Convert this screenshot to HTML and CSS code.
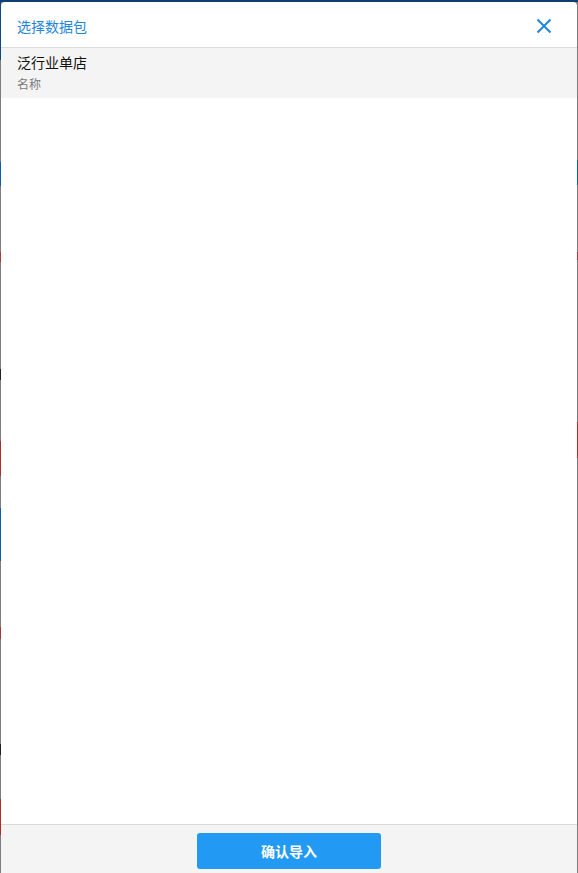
FILE: index.html
```html
<!DOCTYPE html>
<html lang="zh-CN">
<head>
<meta charset="utf-8">
<title>选择数据包</title>
<link rel="stylesheet" href="styles.css">
</head>
<body>
<div class="modal">
  <div class="modal-header">
    <span class="modal-title">选择数据包</span>
    <button class="close-btn" type="button" aria-label="关闭">
      <svg width="16" height="16" viewBox="0 0 16 16"><path d="M1.5 1.5 L14.5 14.5 M14.5 1.5 L1.5 14.5" stroke="#1f86dc" stroke-width="2" fill="none"/></svg>
    </button>
  </div>
  <div class="modal-body">
    <div class="pkg-item">
      <div class="pkg-name">泛行业单店</div>
      <div class="pkg-label">名称</div>
    </div>
  </div>
  <div class="modal-footer">
    <button class="confirm-btn" type="button">确认导入</button>
  </div>
</div>
</body>
</html>
```
FILE: styles.css
```css
html, body {
  margin: 0;
  padding: 0;
  height: 100%;
  overflow: hidden;
}
body {
  font-family: "Liberation Sans", "Noto Sans CJK SC", sans-serif;
  padding: 2px 1px 0 1px;
  box-sizing: border-box;
  background:
    linear-gradient(#0c3f74, #0c3f74) left top / 100% 2px no-repeat,
    linear-gradient(#0c4a86, #0c4a86) left top / 1px 60px no-repeat,
    linear-gradient(#0a5ea8, #0a5ea8) 0 162px / 1px 24px no-repeat,
    linear-gradient(#a33a36, #a33a36) 0 252px / 1px 10px no-repeat,
    linear-gradient(#222, #222) 0 369px / 1px 11px no-repeat,
    linear-gradient(#a8302c, #a8302c) 0 441px / 1px 35px no-repeat,
    linear-gradient(#0a5ea8, #0a5ea8) 0 508px / 1px 53px no-repeat,
    linear-gradient(#a33a36, #a33a36) 0 627px / 1px 12px no-repeat,
    linear-gradient(#222, #222) 0 744px / 1px 11px no-repeat,
    linear-gradient(#a8302c, #a8302c) 0 799px / 1px 36px no-repeat,
    linear-gradient(#0a5ea8, #0a5ea8) right 160px / 1px 25px no-repeat,
    linear-gradient(#a33a36, #a33a36) right 252px / 1px 8px no-repeat,
    linear-gradient(#a8302c, #a8302c) right 422px / 1px 36px no-repeat,
    #7d7d7d;
}
.modal {
  width: 576px;
  height: 871px;
  background: #fff;
  border-radius: 4px 4px 0 0;
  display: flex;
  flex-direction: column;
  overflow: hidden;
}
.modal-header {
  flex: none;
  display: flex;
  align-items: center;
  justify-content: space-between;
  padding: 2px 16px 0 16px;
  box-sizing: border-box;
  border-bottom: 1px solid #dcdcdc;
  height: 46px;
}
.modal-title {
  font-size: 14px;
  color: #1f86dc;
}
.close-btn {
  border: 0;
  background: none;
  padding: 0;
  width: 16px;
  height: 16px;
  display: flex;
  align-items: center;
  justify-content: center;
  margin-right: 9px;
  cursor: pointer;
}
.modal-body {
  flex: 1;
  min-height: 0;
}
.pkg-item {
  background: #f4f4f4;
  padding: 5px 16px 0 16px;
  height: 50px;
  box-sizing: border-box;
}
.pkg-name {
  font-size: 14px;
  line-height: 20px;
  color: #111;
}
.pkg-label {
  font-size: 12px;
  line-height: 18px;
  margin-top: 3px;
  color: #7a7a7a;
}
.modal-footer {
  flex: none;
  height: 49px;
  box-sizing: border-box;
  border-top: 1px solid #dadada;
  background: #f4f4f4;
  display: flex;
  justify-content: center;
  padding-top: 8px;
}
.confirm-btn {
  width: 184px;
  height: 36px;
  border: 0;
  border-radius: 3px;
  background: #2299f3;
  color: #fff;
  font-family: "Liberation Sans", "Noto Sans CJK SC", sans-serif;
  font-size: 14px;
  font-weight: bold;
  cursor: pointer;
}
```
